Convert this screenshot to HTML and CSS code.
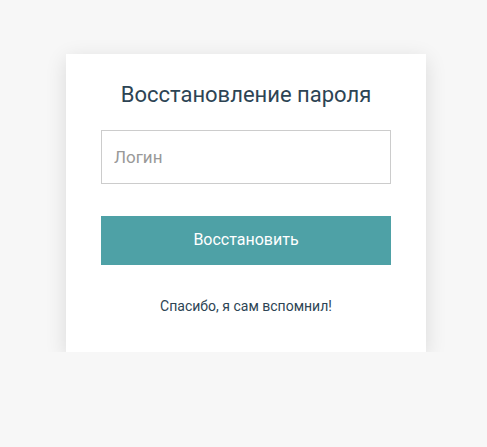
FILE: index.html
```html
<!DOCTYPE html>
<html>

<head>
  <meta charset="UTF-8">
  <title>Восстановление пароля</title>
  <link rel="stylesheet" href="styles.css">
</head>

<body>

  <main class="page">
    <form class="card">
      <h2 class="card-title">Восстановление пароля</h2>
      <input class="field" type="text" placeholder="Логин">
      <button class="btn" type="button">Восстановить</button>
      <a class="link" href="#">Спасибо, я сам вспомнил!</a>
    </form>
  </main>

</body>

</html>
```

FILE: styles.css
```css
body {
  font-family: Roboto, "Helvetica Neue", Arial, sans-serif;
  background-color: #f7f7f7;
  color: #2c3e50;
  margin: 0;
}

.page {
  display: flex;
  justify-content: center;
  padding: 54px 0 0 5px;
}

.card {
  width: 360px;
  box-sizing: border-box;
  padding: 28px 35px 36px;
  background-color: #fff;
  box-shadow: 0 5px 20px rgba(0, 0, 0, 0.12);
  display: flex;
  flex-direction: column;
}

.card-title {
  margin: 0 0 22px;
  font-size: 22px;
  line-height: 26px;
  font-weight: 400;
  text-align: center;
  color: #2d4454;
}

.field {
  height: 54px;
  box-sizing: border-box;
  border: 1px solid #ccc;
  padding: 0 12px;
  font-family: inherit;
  font-size: 17px;
  color: #333;
  outline: none;
}

.field::placeholder {
  color: #999;
}

.btn {
  margin-top: 32px;
  height: 49px;
  padding: 0 0 3px;
  border: 0;
  background-color: #4ea1a6;
  color: #fff;
  font-family: inherit;
  font-size: 16px;
  cursor: pointer;
}

.link {
  margin-top: 31px;
  font-size: 14px;
  line-height: 20px;
  text-align: center;
  color: #2d4454;
  text-decoration: none;
}
```
